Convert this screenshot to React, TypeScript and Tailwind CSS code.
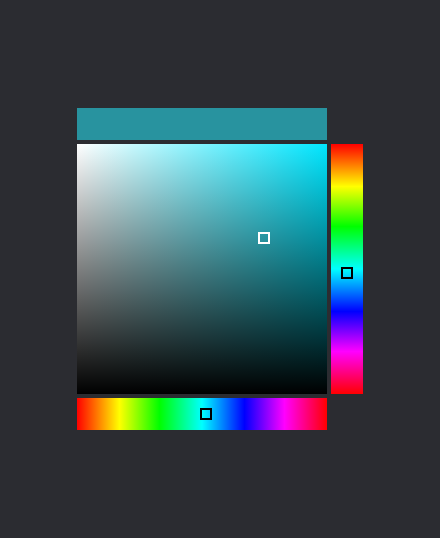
import { useState } from 'react';

// hue 0..360, s/v 0..1
const hsvToHex = (h: number, s: number, v: number) => {
  const f = (n: number) => {
    const k = (n + h / 60) % 6;
    return v - v * s * Math.max(0, Math.min(k, 4 - k, 1));
  };
  const hex = (x: number) => Math.round(x * 255).toString(16).padStart(2, '0');
  return `#${hex(f(5))}${hex(f(3))}${hex(f(1))}`;
};

const App = () => {
  const [hue] = useState(186);
  const [sat] = useState(0.748);
  const [val] = useState(0.624);

  const color = hsvToHex(hue, sat, val);
  const pure = hsvToHex(hue, 1, 1);
  const huePos = (hue / 360) * 100;

  return (
    <div className="min-h-screen w-full bg-[#2b2c31] flex items-center justify-center">
      <div className="flex flex-col gap-1">
        {/* current colour */}
        <div className="w-[250px] h-8" style={{ backgroundColor: color }} />

        <div className="flex gap-1">
          {/* saturation / value square */}
          <div className="relative w-[250px] h-[250px]" style={{ backgroundColor: pure }}>
            <div className="absolute inset-0 bg-gradient-to-r from-white to-transparent" />
            <div className="absolute inset-0 bg-gradient-to-b from-transparent to-black" />
            <div
              className="absolute w-3 h-3 border-2 border-white -translate-x-1/2 -translate-y-1/2"
              style={{ left: `${sat * 100}%`, top: `${(1 - val) * 100}%` }}
            />
          </div>

          {/* vertical hue */}
          <div className="relative w-8 h-[250px] bg-[linear-gradient(to_bottom,#ff0000_0%,#ffff00_17%,#00ff00_33%,#00ffff_50%,#0000ff_67%,#ff00ff_83%,#ff0000_100%)]">
            <div
              className="absolute left-1/2 w-3 h-3 border-2 border-black -translate-x-1/2 -translate-y-1/2"
              style={{ top: `${huePos}%` }}
            />
          </div>
        </div>

        {/* horizontal hue */}
        <div className="relative w-[250px] h-8 bg-[linear-gradient(to_right,#ff0000_0%,#ffff00_17%,#00ff00_33%,#00ffff_50%,#0000ff_67%,#ff00ff_83%,#ff0000_100%)]">
          <div
            className="absolute top-1/2 w-3 h-3 border-2 border-black -translate-x-1/2 -translate-y-1/2"
            style={{ left: `${huePos}%` }}
          />
        </div>
      </div>
    </div>
  );
};

export default App;
